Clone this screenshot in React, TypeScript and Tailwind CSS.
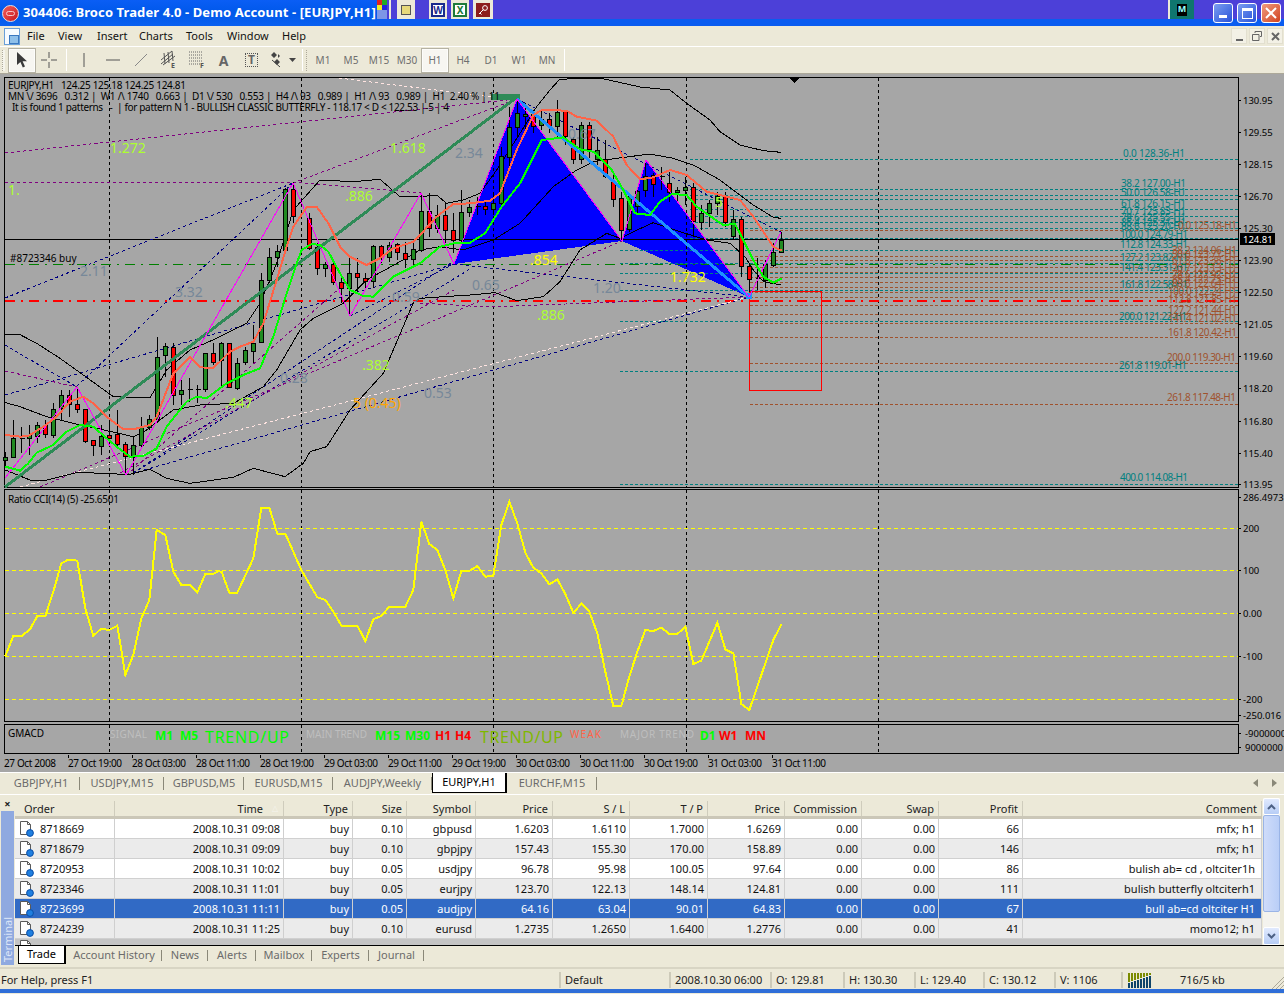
import type { ReactNode } from 'react';

type Pt = [number, number];
// candle: x, body top, body bottom, wick high, wick low, kind
type Candle = [number, number, number, number, number, 'g' | 'r' | 'd'];

// traced at 3x from the chart, so the left half and the right half each have their own origin
const leftPt = ([x, y]: Pt): Pt => [x / 3, 130 + y / 3];
const rightPt = ([x, y]: Pt): Pt => [420 + x / 3, 90 + y / 3];
const line = (a: Pt[], b: Pt[] = []) =>
  [...a.map(leftPt), ...b.map(rightPt)].map((p) => p.join(',')).join(' ');

const leftCandles: Candle[] = [
  [16, 982, 992, 965, 1010, 'g'], [40, 925, 982, 870, 985, 'g'], [64, 925, 929, 890, 970, 'd'], [88, 915, 925, 885, 975, 'g'],
  [112, 885, 920, 875, 940, 'g'], [136, 885, 912, 870, 925, 'r'], [160, 838, 915, 820, 925, 'g'], [184, 796, 835, 780, 870, 'g'],
  [208, 796, 822, 780, 860, 'r'], [232, 824, 838, 770, 850, 'r'], [256, 838, 935, 838, 940, 'r'], [280, 932, 946, 930, 978, 'r'],
  [304, 918, 950, 885, 975, 'g'], [328, 916, 925, 880, 945, 'r'], [352, 912, 944, 840, 950, 'r'], [376, 942, 980, 935, 1035, 'r'],
  [400, 946, 982, 920, 1035, 'g'], [424, 892, 946, 860, 950, 'g'], [448, 868, 892, 855, 900, 'g'], [472, 682, 868, 620, 880, 'g'],
  [496, 648, 676, 640, 740, 'g'], [520, 652, 796, 640, 825, 'r'], [544, 782, 794, 750, 825, 'g'], [568, 778, 782, 745, 815, 'd'],
  [592, 778, 782, 765, 820, 'd'], [616, 670, 778, 670, 785, 'g'], [640, 670, 698, 640, 705, 'r'], [664, 640, 690, 635, 770, 'g'],
  [688, 640, 772, 640, 775, 'r'], [712, 700, 775, 685, 780, 'g'], [736, 660, 698, 650, 705, 'g'], [760, 640, 664, 585, 700, 'g'],
  [784, 450, 638, 430, 640, 'g'], [808, 382, 452, 355, 460, 'g'], [832, 364, 382, 345, 410, 'g'], [856, 178, 362, 175, 370, 'g'],
  [880, 178, 260, 155, 278, 'r'], [928, 265, 355, 250, 360, 'r'], [952, 352, 415, 340, 435, 'r'], [976, 404, 416, 395, 440, 'g'],
  [1000, 404, 458, 398, 465, 'r'], [1024, 458, 474, 440, 520, 'r'], [1048, 430, 474, 385, 555, 'g'], [1072, 430, 442, 385, 490, 'r'],
  [1096, 446, 455, 430, 480, 'r'], [1120, 348, 455, 345, 475, 'g'], [1144, 350, 382, 345, 400, 'r'], [1168, 346, 382, 335, 395, 'g'],
  [1192, 344, 368, 340, 390, 'r'], [1216, 370, 388, 335, 415, 'r'], [1240, 358, 388, 335, 405, 'g'], [1264, 244, 360, 190, 365, 'g'],
];

const rightCandles: Candle[] = [
  [28, 365, 415, 310, 440, 'r'], [52, 375, 415, 345, 430, 'g'], [76, 375, 422, 340, 460, 'r'], [100, 420, 450, 370, 490, 'r'],
  [124, 366, 450, 300, 460, 'g'], [148, 352, 368, 330, 380, 'g'], [172, 349, 352, 320, 375, 'd'], [196, 350, 358, 335, 375, 'r'],
  [220, 340, 358, 310, 375, 'g'], [244, 200, 340, 170, 345, 'g'], [268, 112, 202, 50, 235, 'g'], [292, 70, 112, 30, 140, 'g'],
  [316, 72, 78, 40, 130, 'g'], [340, 72, 108, 60, 130, 'r'], [364, 88, 105, 60, 120, 'g'], [388, 88, 108, 70, 130, 'r'],
  [412, 68, 110, 30, 140, 'g'], [436, 65, 140, 60, 165, 'r'], [460, 148, 208, 140, 222, 'r'], [484, 105, 208, 95, 222, 'g'],
  [508, 105, 178, 95, 205, 'r'], [532, 180, 208, 140, 225, 'g'], [556, 208, 258, 150, 265, 'r'], [580, 275, 328, 245, 350, 'r'],
  [604, 325, 422, 305, 450, 'r'], [628, 320, 418, 315, 425, 'g'], [652, 305, 350, 295, 370, 'g'], [676, 258, 302, 210, 320, 'g'],
  [700, 255, 282, 250, 320, 'r'], [724, 260, 263, 230, 300, 'd'], [748, 280, 308, 245, 335, 'r'], [772, 300, 308, 290, 340, 'g'],
  [796, 292, 302, 262, 345, 'g'], [820, 292, 395, 280, 440, 'r'], [844, 370, 397, 345, 420, 'g'], [868, 340, 370, 330, 410, 'g'],
  [892, 320, 340, 305, 375, 'g'], [916, 318, 398, 305, 410, 'r'], [940, 388, 440, 360, 450, 'g'], [964, 388, 530, 380, 560, 'r'],
  [988, 528, 568, 520, 605, 'r'], [1012, 564, 567, 505, 600, 'd'], [1036, 522, 570, 510, 595, 'g'], [1060, 488, 525, 460, 530, 'g'],
  [1084, 450, 488, 425, 490, 'g'],
];

const greenMa = line(
  [[16, 1010], [60, 1022], [85, 1000], [110, 968], [160, 945], [200, 905], [240, 885], [280, 890], [320, 925], [350, 950], [390, 980], [430, 978], [470, 955], [500, 890], [560, 815], [590, 800], [620, 805], [680, 760], [730, 735], [780, 715], [820, 620], [860, 490], [890, 400], [905, 360], [935, 342], [960, 345], [985, 365], [1020, 430], [1050, 480], [1090, 498], [1120, 500], [1150, 470], [1180, 440], [1230, 415]],
  [[0, 520], [60, 470], [100, 460], [150, 458], [195, 430], [245, 350], [300, 280], [340, 200], [365, 150], [430, 142], [480, 178], [520, 185], [575, 240], [610, 300], [645, 370], [690, 375], [720, 335], [755, 312], [800, 315], [830, 350], [870, 378], [910, 405], [945, 402], [965, 440], [1000, 510], [1030, 560], [1060, 578], [1085, 565]],
);
const orangeMa = line(
  [[16, 915], [60, 920], [85, 918], [130, 890], [170, 860], [210, 815], [250, 800], [280, 820], [320, 860], [370, 898], [400, 898], [450, 885], [470, 860], [520, 730], [570, 680], [600, 712], [640, 714], [690, 665], [720, 650], [760, 635], [790, 580], [830, 450], [860, 350], [880, 290], [920, 232], [950, 230], [985, 280], [1020, 350], [1050, 380], [1100, 405], [1140, 385], [1180, 355], [1240, 335]],
  [[0, 435], [50, 380], [100, 342], [150, 340], [210, 332], [240, 310], [290, 180], [340, 75], [365, 60], [440, 62], [470, 80], [530, 92], [580, 140], [620, 225], [660, 268], [700, 262], [750, 240], [800, 255], [860, 305], [960, 330], [1000, 380], [1060, 470], [1085, 482]],
);
const bandLines = [
  line(
    [[16, 614], [60, 614], [110, 640], [180, 685], [250, 735], [340, 800], [450, 803], [500, 720], [570, 660], [650, 625], [740, 580], [780, 520], [830, 400], [880, 240], [960, 150], [1060, 155], [1140, 148], [1200, 200]],
    [[0, 320], [50, 315], [80, 340], [130, 330], [180, 310], [230, 240], [300, 130], [350, 50], [390, 0], [417, -30], [465, -36], [540, -36], [660, -9], [750, 0], [800, 40], [870, 90], [900, 125], [960, 165], [1030, 182], [1083, 187]],
  ),
  line(
    [[16, 818], [60, 830], [140, 860], [220, 880], [290, 895], [400, 920], [440, 900], [520, 840], [600, 825], [700, 820], [790, 770], [830, 720], [900, 600], [940, 565], [1030, 520], [1100, 450], [1200, 395]],
    [[0, 480], [60, 470], [130, 480], [220, 450], [300, 400], [400, 290], [470, 240], [520, 215], [590, 205], [690, 192], [760, 205], [820, 225], [900, 270], [1000, 345], [1060, 382], [1083, 385]],
  ),
  line(
    [[16, 1020], [90, 1050], [140, 1050], [230, 1028], [330, 1030], [380, 1035], [450, 1018], [500, 1045], [570, 1060], [700, 1042], [760, 1015], [855, 1040], [910, 1000], [930, 965], [980, 950], [1050, 840], [1150, 730], [1240, 518]],
    [[0, 625], [70, 620], [150, 615], [225, 608], [290, 632], [370, 620], [420, 575], [480, 480], [560, 430], [600, 445], [640, 425], [700, 398], [780, 425], [860, 450], [930, 460], [975, 500], [1000, 540], [1030, 575], [1083, 585]],
  ),
];

const zigzag = '5,478 77,387 126,475 293,183 350,316 421,193 454,264 517,99 622,241 646,160 749,297 781,232';

// fib fan lines, page coordinates
const navyDashes = ['5,298 293,183', '77,386 293,183', '5,345 77,387', '133,473 454,261', '133,473 470,269', '127,475 749,297', '350,316 454,264', '5,395 454,264', '454,264 749,297', '517,99 781,232'];
const purpleDashes = ['5,153 517,99', '293,183 517,99', '5,182 293,182 421,193', '5,371 77,387', '40,487 622,241', '127,475 350,279', '120,473 454,290', '420,303 487,307 749,297'];
const pinkDashes = ['20,487 749,297', '339,78 492,97'];

const tealLines: [number, number][] = [[159, 690], [189, 690], [195, 690], [199, 690], [209, 690], [216, 690], [222, 690], [228, 690], [238, 690], [250, 620], [263, 620], [273, 620], [290, 620], [321, 620], [371, 620], [484, 620]];
const brownLines = [230, 256, 260, 267, 272, 277, 282, 287, 292, 297, 305, 314, 323, 337, 363, 404];

const tealLabels: [string, number, number][] = [
  ['0.0 128.36-H1', 1123, 157], ['38.2 127.00-H1', 1121, 187], ['50.0 126.58-H1', 1121, 196], ['61.8 126.15-H1', 1121, 207],
  ['70.7 125.83-H1', 1121, 215], ['78.6 125.55-H1', 1121, 221], ['85.4 125.31-H1', 1121, 226], ['88.6 125.20-H1', 1121, 230],
  ['100.0 124.79-H1', 1120, 238], ['112.8 124.33-H1', 1120, 248], ['127.2 123.82-H1', 1120, 261], ['141.4 123.31-H1', 1120, 271],
  ['161.8 122.58-H1', 1120, 288], ['200.0 121.22-H1', 1119, 320], ['261.8 119.01-H1', 1119, 369], ['400.0 114.08-H1', 1120, 481],
];
const brownLabels: [string, number, number][] = [
  ['0.0 125.18-H1', 1178, 229], ['38.2 124.06-H1', 1172, 254], ['50.0 123.71-H1', 1172, 258], ['61.8 123.38-H1', 1172, 264],
  ['70.7 123.13-H1', 1172, 272], ['78.6 122.92-H1', 1172, 278], ['85.4 122.73-H1', 1172, 283], ['88.6 122.64-H1', 1172, 287],
  ['100.0 122.24-H1', 1168, 295], ['112.8 121.85-H1', 1168, 303], ['127.2 121.44-H1', 1168, 314], ['141.4 121.02-H1', 1168, 322],
  ['161.8 120.42-H1', 1168, 336], ['200.0 119.30-H1', 1167, 361], ['261.8 117.48-H1', 1167, 401],
];

const ratioLabels: [string, number, number, string][] = [
  ['1.272', 110, 153, '#adff2f'], ['1.', 8, 195, '#adff2f'], ['1.618', 390, 153, '#adff2f'], ['.886', 345, 201, '#adff2f'],
  ['.382', 362, 370, '#adff2f'], ['.447', 225, 408, '#adff2f'], ['.886', 537, 320, '#adff2f'], ['5', 715, 207, '#adff2f'],
  ['2.11', 80, 276, '#778899'], ['3.32', 175, 297, '#778899'], ['0.59', 392, 302, '#778899'], ['0.28', 280, 383, '#778899'],
  ['0.65', 472, 290, '#778899'], ['1.20', 593, 293, '#778899'], ['0.53', 424, 398, '#778899'], ['2.34', 455, 158, '#778899'],
  ['0.67', 568, 139, '#778899'], ['.854', 530, 265, '#ffff00'], ['1.732', 670, 282, '#ffff00'], ['5 (0.45)', 353, 408, '#ffa500'],
];

const priceAxis: [string, number][] = [['130.95', 100], ['129.55', 132], ['128.15', 164], ['126.70', 196], ['125.30', 228], ['123.90', 260], ['122.50', 292], ['121.05', 324], ['119.60', 356], ['118.20', 388], ['116.80', 421], ['115.40', 453], ['113.95', 484]];
const cciAxis: [string, number][] = [['286.4973', 497], ['200', 528], ['100', 570], ['0.00', 613], ['-100', 656], ['-200', 699], ['-250.016', 715]];
const cciLevels = [528, 570, 613, 656, 699];
const gridX = [109, 301, 493, 686, 878];

const cciLine = [
  ...([[16, 498], [40, 438], [65, 438], [90, 418], [112, 378], [136, 378], [160, 305], [184, 220], [205, 209], [232, 212], [256, 355], [280, 438], [303, 416], [328, 420], [352, 407], [376, 555], [400, 495], [424, 385], [448, 330], [470, 120], [496, 135], [520, 245], [544, 285], [570, 285], [592, 308], [616, 252], [640, 252], [655, 243], [665, 246], [688, 308], [712, 308], [760, 205], [784, 53], [808, 53], [832, 131], [856, 131], [904, 240], [952, 322], [976, 330], [1000, 365], [1024, 407], [1072, 407], [1096, 453], [1120, 388], [1144, 378], [1168, 350], [1216, 350], [1240, 300]] as Pt[]).map(([x, y]) => `${x / 3},${490 + y / 3}`),
  ...([[64, 95], [88, 162], [112, 180], [136, 240], [160, 325], [184, 243], [208, 243], [232, 228], [256, 260], [280, 257], [304, 105], [328, 35], [352, 100], [376, 188], [400, 233], [424, 250], [448, 283], [472, 268], [496, 312], [520, 369], [544, 341], [568, 365], [592, 430], [616, 545], [640, 648], [664, 648], [688, 560], [712, 485], [736, 420], [760, 423], [784, 413], [808, 432], [832, 432], [856, 410], [880, 522], [904, 512], [952, 398], [976, 478], [1000, 490], [1024, 642], [1048, 660], [1072, 590], [1096, 520], [1120, 450], [1144, 403]] as Pt[]).map(([x, y]) => `${400 + x / 3},${490 + y / 3}`),
].join(' ');

const timeLabels = ['27 Oct 2008', '27 Oct 19:00', '28 Oct 03:00', '28 Oct 11:00', '28 Oct 19:00', '29 Oct 03:00', '29 Oct 11:00', '29 Oct 19:00', '30 Oct 03:00', '30 Oct 11:00', '30 Oct 19:00', '31 Oct 03:00', '31 Oct 11:00'];

const orders = [
  ['8718669', '2008.10.31 09:08', 'buy', '0.10', 'gbpusd', '1.6203', '1.6110', '1.7000', '1.6269', '0.00', '0.00', '66', 'mfx; h1'],
  ['8718679', '2008.10.31 09:09', 'buy', '0.10', 'gbpjpy', '157.43', '155.30', '170.00', '158.89', '0.00', '0.00', '146', 'mfx; h1'],
  ['8720953', '2008.10.31 10:02', 'buy', '0.05', 'usdjpy', '96.78', '95.98', '100.05', '97.64', '0.00', '0.00', '86', 'bulish ab= cd , oltciter1h'],
  ['8723346', '2008.10.31 11:01', 'buy', '0.05', 'eurjpy', '123.70', '122.13', '148.14', '124.81', '0.00', '0.00', '111', 'bulish butterfly oltciterh1'],
  ['8723699', '2008.10.31 11:11', 'buy', '0.05', 'audjpy', '64.16', '63.04', '90.01', '64.83', '0.00', '0.00', '67', 'bull ab=cd oltciter H1'],
  ['8724239', '2008.10.31 11:25', 'buy', '0.10', 'eurusd', '1.2735', '1.2650', '1.6400', '1.2776', '0.00', '0.00', '41', 'momo12; h1'],
];
const columns = ['Order', 'Time', 'Type', 'Size', 'Symbol', 'Price', 'S / L', 'T / P', 'Price', 'Commission', 'Swap', 'Profit', 'Comment'];
const rowGrid = 'grid grid-cols-[100px_169px_69px_54px_69px_77px_77px_78px_77px_77px_77px_84px_239px]';

const chartTabs = [
  { label: 'GBPJPY,H1', width: 'w-[78px]' }, { label: 'USDJPY,M15', width: 'w-[84px]' }, { label: 'GBPUSD,M5', width: 'w-[80px]' },
  { label: 'EURUSD,M15', width: 'w-[89px]' }, { label: 'AUDJPY,Weekly', width: 'w-[99px]' }, { label: 'EURJPY,H1', width: 'w-[75px]', active: true },
  { label: 'EURCHF,M15', width: 'w-[90px]' },
];
const terminalTabs = [
  { label: 'Account History', width: 'w-[96px]' }, { label: 'News', width: 'w-[46px]' }, { label: 'Alerts', width: 'w-[48px]' },
  { label: 'Mailbox', width: 'w-[56px]' }, { label: 'Experts', width: 'w-[57px]' }, { label: 'Journal', width: 'w-[55px]' },
];
const menus = [
  { label: 'File', width: 'w-[31px]' }, { label: 'View', width: 'w-[39px]' }, { label: 'Insert', width: 'w-[42px]' }, { label: 'Charts', width: 'w-[47px]' },
  { label: 'Tools', width: 'w-[41px]' }, { label: 'Window', width: 'w-[55px]' }, { label: 'Help', width: 'w-[30px]' },
];
const statusCells = [
  { label: '2008.10.30 06:00', width: 'w-[101px]' }, { label: 'O: 129.81', width: 'w-[73px]' }, { label: 'H: 130.30', width: 'w-[71px]' },
  { label: 'L: 129.40', width: 'w-[69px]' }, { label: 'C: 130.12', width: 'w-[71px]' }, { label: 'V: 1106', width: 'w-[67px]' },
];
const timeframes = ['M1', 'M5', 'M15', 'M30', 'H1', 'H4', 'D1', 'W1', 'MN'];

function CandleMarks({ candles, at }: { candles: Candle[]; at: (p: Pt) => Pt }) {
  return (
    <g>
      {candles.map(([x, top, bottom, hi, lo, kind]) => {
        const [cx, y1] = at([x, top]);
        const [, y2] = at([x, bottom]);
        const [, wickTop] = at([x, hi]);
        const [, wickBottom] = at([x, lo]);
        const px = Math.round(cx) + 0.5;
        return (
          <g key={x}>
            <line x1={px} x2={px} y1={wickTop} y2={wickBottom} stroke="#000" />
            {kind === 'd' ? (
              <line x1={px - 2} x2={px + 3} y1={y1} y2={y1} stroke="#000" />
            ) : (
              <rect x={px - 2} y={y1} width={4} height={y2 - y1} fill={kind === 'g' ? '#228b22' : '#ff0000'} stroke="#000" />
            )}
          </g>
        );
      })}
    </g>
  );
}

function GridLines({ top, bottom }: { top: number; bottom: number }) {
  return (
    <g>
      {gridX.map((x) => (
        <line key={x} x1={x + 0.5} x2={x + 0.5} y1={top} y2={bottom} stroke="#000" strokeDasharray="3 3" />
      ))}
    </g>
  );
}

function AxisLabels({ labels }: { labels: [string, number][] }) {
  return (
    <g>
      {labels.map(([text, y]) => (
        <g key={text}>
          <line x1={1238} x2={1241} y1={y} y2={y} stroke="#000" />
          <text x={1243} y={y + 3.5} fontSize={9.5} fill="#000">{text}</text>
        </g>
      ))}
    </g>
  );
}

function MainPane() {
  return (
    <svg width={1284} height={415} viewBox="0 74 1284 415" shapeRendering="crispEdges" className="block">
      <rect x={4.5} y={77.5} width={1234} height={410} fill="none" stroke="#000" />
      <polygon points="454,264 517,99 622,241" fill="#0000ff" />
      <polygon points="622,241 646,160 749,297" fill="#0000ff" />
      <GridLines top={78} bottom={487} />
      <polygon points="789,78 799,78 794,83" fill="#000" />

      {tealLines.map(([y, x]) => (
        <line key={y} x1={x} x2={1238} y1={y + 0.5} y2={y + 0.5} stroke="#008080" strokeDasharray="3 2" />
      ))}
      {brownLines.map((y) => (
        <line key={y} x1={750} x2={1238} y1={y + 0.5} y2={y + 0.5} stroke="#a0522d" strokeDasharray="3 2" />
      ))}
      <line x1={5} x2={1238} y1={239.5} y2={239.5} stroke="#000" />
      <line x1={5} x2={1238} y1={264.5} y2={264.5} stroke="#008000" strokeDasharray="10 6 2 6" />
      <line x1={5} x2={1238} y1={300.5} y2={300.5} stroke="#ff0000" strokeWidth={2} strokeDasharray="10 6 2 6" />

      {navyDashes.map((points) => (
        <polyline key={points} points={points} fill="none" stroke="#000080" strokeDasharray="3 3" />
      ))}
      {purpleDashes.map((points) => (
        <polyline key={points} points={points} fill="none" stroke="#800080" strokeDasharray="3 3" />
      ))}
      {pinkDashes.map((points) => (
        <polyline key={points} points={points} fill="none" stroke="#ffe4e1" strokeDasharray="3 3" />
      ))}

      <rect x={749.5} y={291.5} width={72} height={99} fill="none" stroke="#ff0000" />
      {bandLines.map((points) => (
        <polyline key={points} points={points} fill="none" stroke="#000" />
      ))}
      <CandleMarks candles={leftCandles} at={leftPt} />
      <CandleMarks candles={rightCandles} at={rightPt} />

      <polyline points="5,487 517,97" fill="none" stroke="#2e8b57" strokeWidth={3} />
      {[494, 500, 506, 512, 517].map((x) => (
        <circle key={x} cx={x} cy={97} r={3.5} fill="#2e8b57" />
      ))}
      <polyline points="517,99 749,297" fill="none" stroke="#1e90ff" strokeWidth={3} />
      <circle cx={749} cy={296} r={3.5} fill="#1e90ff" />
      <polyline points={zigzag} fill="none" stroke="#ff00ff" />
      <polyline points={orangeMa} fill="none" stroke="#ff6347" strokeWidth={2} />
      <polyline points={greenMa} fill="none" stroke="#00ff00" strokeWidth={2} />

      <text x={8} y={89} fontSize={10} fill="#000" className="whitespace-pre" textLength={178}>EURJPY,H1   124.25 125.18 124.25 124.81</text>
      <text x={8} y={100} fontSize={10} fill="#000" className="whitespace-pre" textLength={492}>{'MN \\/ 3696   0.312 |  W1 /\\ 1740   0.663 |  D1 \\/ 530   0.553 |  H4 /\\ 93   0.989 |  H1 /\\ 93   0.989 |  H1  2.40 % | 11'}</text>
      <text x={12} y={111} fontSize={10} fill="#000" className="whitespace-pre" textLength={437}>{'It is found 1 patterns   -  | for pattern N 1 - BULLISH CLASSIC BUTTERFLY - 118.17 < D < 122.53 |-5 | 4'}</text>
      <text x={10} y={262} fontSize={10} fill="#000">#8723346 buy</text>

      {ratioLabels.map(([text, x, y, color]) => (
        <text key={`${text}${x}`} x={x} y={y} fontSize={14} fill={color}>{text}</text>
      ))}
      {tealLabels.map(([text, x, y]) => (
        <text key={text} x={x} y={y} fontSize={10} fill="#008080" textLength={text.length > 14 ? 68 : text.length > 13 ? 65 : 62}>{text}</text>
      ))}
      {brownLabels.map(([text, x, y]) => (
        <text key={text} x={x} y={y} fontSize={10} fill="#a0522d" textLength={text.length > 14 ? 69 : text.length > 13 ? 65 : 59}>{text}</text>
      ))}

      <AxisLabels labels={priceAxis} />
      <rect x={1240} y={233} width={35} height={12} fill="#000" />
      <text x={1243} y={243} fontSize={9.5} fill="#fff">124.81</text>
    </svg>
  );
}

function CciPane() {
  return (
    <svg width={1284} height={234} viewBox="0 489 1284 234" shapeRendering="crispEdges" className="block">
      <line x1={4.5} x2={4.5} y1={489} y2={722} stroke="#000" />
      <line x1={1238.5} x2={1238.5} y1={489} y2={722} stroke="#000" />
      <line x1={4} x2={1239} y1={721.5} y2={721.5} stroke="#000" />
      <line x1={4} x2={1239} y1={489.5} y2={489.5} stroke="#000" />
      <GridLines top={490} bottom={721} />
      {cciLevels.map((y) => (
        <line key={y} x1={5} x2={1238} y1={y + 0.5} y2={y + 0.5} stroke="#ffff00" strokeDasharray="4 3" />
      ))}
      <polyline points={cciLine} fill="none" stroke="#ffff00" strokeWidth={2} />
      <text x={8} y={503} fontSize={10} fill="#000" textLength={111}>Ratio CCI(14) (5) -25.6501</text>
      <AxisLabels labels={cciAxis} />
    </svg>
  );
}

function MacdPane() {
  const small: [string, number, number, string][] = [['SIGNAL', 110, 37, '#bebebe'], ['MAIN TREND', 306, 61, '#bebebe'], ['WEAK', 570, 31, '#ff6347'], ['MAJOR TREND', 620, 74, '#bebebe']];
  const bold: [string, number, string][] = [['M1', 155, '#00ff00'], ['M5', 180, '#00ff00'], ['M15', 375, '#00ff00'], ['M30', 405, '#00ff00'], ['H1', 435, '#ff0000'], ['H4', 455, '#ff0000'], ['D1', 700, '#00ff00'], ['W1', 719, '#ff0000'], ['MN', 745, '#ff0000']];
  return (
    <svg width={1284} height={32} viewBox="0 723 1284 32" shapeRendering="crispEdges" className="block">
      <rect x={4.5} y={724.5} width={1234} height={29} fill="none" stroke="#000" />
      <GridLines top={725} bottom={753} />
      <text x={8} y={737} fontSize={10} fill="#000">GMACD</text>
      {small.map(([text, x, w, color]) => (
        <text key={text} x={x} y={738} fontSize={10} fill={color} textLength={w}>{text}</text>
      ))}
      {bold.map(([text, x, color]) => (
        <text key={text} x={x} y={740} fontSize={12} fontWeight={700} fill={color}>{text}</text>
      ))}
      <text x={205} y={743} fontSize={16} fill="#00ff00" textLength={84}>TREND/UP</text>
      <text x={480} y={743} fontSize={16} fill="#7fb800" textLength={83}>TREND/UP</text>
      <line x1={1238} x2={1241} y1={733} y2={733} stroke="#000" />
      <line x1={1238} x2={1241} y1={747} y2={747} stroke="#000" />
      <text x={1245} y={737} fontSize={9.5} fill="#000">-9000000</text>
      <text x={1245} y={751} fontSize={9.5} fill="#000">9000000</text>
    </svg>
  );
}

function TimeAxis() {
  return (
    <svg width={1284} height={17} viewBox="0 755 1284 17" shapeRendering="crispEdges" className="block">
      {timeLabels.map((text, i) => (
        <g key={text}>
          {i > 0 && <line x1={68.5 + (i - 1) * 64} x2={68.5 + (i - 1) * 64} y1={754} y2={758} stroke="#000" />}
          <text x={4 + i * 64} y={767} fontSize={10} fill="#000" textLength={i === 0 ? 52 : 54}>{text}</text>
        </g>
      ))}
    </svg>
  );
}

function OrderIcon({ small }: { small?: boolean }) {
  return (
    <svg width={15} height={17} viewBox="0 0 15 17" className="shrink-0">
      <path d="M1.5 1.5h7l3 3v10h-10z" fill="#fff" stroke="#5a5a5a" />
      <path d="M8.5 1.5v3h3" fill="none" stroke="#5a5a5a" />
      {!small && <circle cx={11} cy={13} r={3.4} fill="#1f7fe0" stroke="#0b4fa8" />}
    </svg>
  );
}

function ToolSlot({ width, children, selected }: { width: string; children: ReactNode; selected?: boolean }) {
  return (
    <div className={`${width} h-[23px] flex items-center justify-center shrink-0 ${selected ? 'border border-[#fdfdfb] outline outline-1 outline-[#b5b2a4] bg-[#f7f6f1]' : ''}`}>
      {children}
    </div>
  );
}

function ToolSep() {
  return <div className="w-px h-[22px] mx-[3px] bg-[#aca899] border-r border-white shrink-0" />;
}

function Toolbar() {
  return (
    <div className="h-[27px] shrink-0 flex items-center border-b border-[#aca899] bg-[#ece9d8]">
      <div className="w-[3px] h-[21px] ml-[2px] mr-[4px] border-l border-dotted border-[#aca899] bg-[#f5f4ec] shrink-0" />
      <ToolSlot width="w-[26px]" selected>
        <svg width={14} height={18} viewBox="0 0 14 18"><path d="M2 1v13l3.4-3 2.4 5.6 2.2-1-2.4-5.4h4.4z" fill="#3a3a3a" /></svg>
      </ToolSlot>
      <ToolSlot width="w-[28px]">
        <svg width={16} height={16} viewBox="0 0 16 16" stroke="#555"><path d="M0 8h6M10 8h6M8 0v6M8 10v6" /></svg>
      </ToolSlot>
      <ToolSep />
      <ToolSlot width="w-[28px]">
        <svg width={10} height={14} viewBox="0 0 10 14" stroke="#555"><path d="M5 0v14" /></svg>
      </ToolSlot>
      <ToolSlot width="w-[29px]">
        <svg width={14} height={4} viewBox="0 0 14 4" stroke="#555"><path d="M0 2h14" /></svg>
      </ToolSlot>
      <ToolSlot width="w-[28px]">
        <svg width={14} height={14} viewBox="0 0 14 14" stroke="#888"><path d="M1 13 13 1" /></svg>
      </ToolSlot>
      <ToolSlot width="w-[27px]">
        <svg width={18} height={20} viewBox="0 0 18 20" fill="none" stroke="#555">
          <path d="M1 10 12 1M1 14 13 4M3 15 15 6M4 3l1 11M8 2l1 11M12 1l1 10" />
          <text x={11} y={18} fontSize={7} fontWeight={700} fill="#555" stroke="none">E</text>
        </svg>
      </ToolSlot>
      <ToolSlot width="w-[29px]">
        <svg width={18} height={20} viewBox="0 0 18 20" fill="none" stroke="#666" strokeDasharray="1 1">
          <path d="M1 2h13M1 5h13M1 8h13M1 11h13M1 14h13" />
          <text x={12} y={18} fontSize={7} fontWeight={700} fill="#555" stroke="none" strokeDasharray="0">F</text>
        </svg>
      </ToolSlot>
      <ToolSlot width="w-[25px]"><span className="text-[14px] font-bold text-[#666]">A</span></ToolSlot>
      <ToolSlot width="w-[31px]">
        <div className="w-[13px] h-[14px] border border-dotted border-[#555] flex items-center justify-center text-[12px] font-bold text-[#666] leading-none">T</div>
      </ToolSlot>
      <ToolSlot width="w-[32px]">
        <svg width={26} height={16} viewBox="0 0 26 16" fill="#444"><path d="M1 3l3-3 3 3-3 3zM7 7l3 3-3 3-3-3zM8 2l2 2-2 2zM19 6h7l-3.5 4z" /><path d="M2 8l8 7" stroke="#444" fill="none" /></svg>
      </ToolSlot>
      <ToolSep />
      <div className="w-[2px] h-[21px] mr-[1px] border-l border-dotted border-[#aca899] shrink-0" />
      {timeframes.map((tf) => (
        <ToolSlot key={tf} width={tf === 'H1' ? 'w-[26px] mx-px' : 'w-[28px]'} selected={tf === 'H1'}>
          <span className="text-[10px] text-[#6e6e6e]">{tf}</span>
        </ToolSlot>
      ))}
      <ToolSep />
    </div>
  );
}

function TitleBar() {
  return (
    <div className="h-[26px] shrink-0 relative flex bg-[#0a5cf0]">
      <div className="w-[377px] h-full flex items-center bg-gradient-to-b from-[#0a5ef5] via-[#0058ea] to-[#0a60f0] shrink-0">
        <div className="w-[17px] h-[17px] ml-[2px] mr-[4px] rounded-full bg-gradient-to-br from-[#f25a5a] to-[#c80f1e] border border-[#e8e0e0] flex items-center justify-center shrink-0">
          <div className="w-[9px] h-[5px] rounded-full border border-[#f6c8c8]" />
        </div>
        <span className="text-[13px] font-bold text-white whitespace-nowrap tracking-[0.1px]">304406: Broco Trader 4.0 - Demo Account - [EURJPY,H1]</span>
      </div>
      <div className="flex-1 h-[19px] bg-[#4c40d8] flex items-start">
        <div className="w-[10px] h-[19px] bg-[#7d96e6]">
          <div className="grid grid-cols-2 w-[10px] h-[10px]">
            <div className="bg-[#d22]" /><div className="bg-[#2a2]" /><div className="bg-[#ee2]" /><div className="bg-[#22d]" />
          </div>
        </div>
        <div className="w-[2px] h-[19px] ml-[2px] bg-[#ece9d8]" />
        <div className="w-[18px] h-[19px] ml-[6px] bg-[#ece9d8] flex items-center justify-center">
          <div className="w-[10px] h-[10px] bg-[#e6d97a] border border-[#555]" />
        </div>
        <div className="w-[18px] h-[19px] ml-[14px] bg-[#ece9d8] flex items-center justify-center">
          <div className="w-[14px] h-[14px] bg-white border-2 border-[#1a2a8c] text-[10px] font-bold leading-none text-[#1a2a8c] text-center">W</div>
        </div>
        <div className="w-[18px] h-[19px] ml-[4px] bg-[#ece9d8] flex items-center justify-center">
          <div className="w-[14px] h-[14px] bg-white border-2 border-[#1d7a3a] text-[10px] font-bold leading-none text-[#1d7a3a] text-center">X</div>
        </div>
        <div className="w-[20px] h-[19px] ml-[4px] bg-[#ece9d8] flex items-center justify-center">
          <svg width={14} height={14} viewBox="0 0 14 14"><rect width={14} height={14} fill="#8c1c1c" /><circle cx={9} cy={5} r={2.4} fill="none" stroke="#fff" /><path d="M7.5 6.5 3 11M4 10l1.5 1.5" stroke="#fff" fill="none" /></svg>
        </div>
        <div className="ml-[675px] w-[26px] h-[19px] bg-[#0f766e] border-l-2 border-[#ece9d8] flex items-center justify-center">
          <div className="w-[10px] h-[12px] bg-black text-[9px] font-bold leading-none text-[#9ff] text-center">M</div>
        </div>
      </div>
      <div className="absolute right-[3px] top-[3px] flex gap-[4px]">
        <div className="w-[20px] h-[20px] rounded-[3px] border border-white bg-gradient-to-br from-[#7c9cf0] to-[#2a50d8] flex items-end pl-[5px] pb-[4px]">
          <div className="w-[8px] h-[3px] bg-white" />
        </div>
        <div className="w-[20px] h-[20px] rounded-[3px] border border-white bg-gradient-to-br from-[#7c9cf0] to-[#2a50d8] flex items-center justify-center">
          <div className="w-[11px] h-[11px] border border-white border-t-[3px]" />
        </div>
        <div className="w-[20px] h-[20px] rounded-[3px] border border-white bg-gradient-to-br from-[#f09a7c] to-[#d0401c] flex items-center justify-center">
          <svg width={12} height={12} viewBox="0 0 12 12" stroke="#fff" strokeWidth={2}><path d="M1 1l10 10M11 1 1 11" /></svg>
        </div>
      </div>
    </div>
  );
}

function MenuBar() {
  return (
    <div className="h-[21px] shrink-0 flex items-center border-b border-white bg-[#ece9d8] relative">
      <div className="w-[16px] h-[17px] ml-[4px] mr-[7px] bg-[#f7fbff] border border-[#6a9fd8] shrink-0 flex items-end justify-end">
        <div className="w-[10px] h-[9px] bg-[#8fc0ea] border border-[#3a78c0]" />
      </div>
      {menus.map((m) => (
        <span key={m.label} className={`${m.width} text-[11px] text-[#111] shrink-0`}>{m.label}</span>
      ))}
      <div className="ml-auto mr-[1px] flex gap-[2px]">
        <div className="w-[16px] h-[16px] bg-[#f3f1e6] border border-[#e2dfcf] flex items-end justify-center pb-[2px]"><div className="w-[7px] h-[2px] bg-[#666]" /></div>
        <div className="w-[16px] h-[16px] bg-[#f3f1e6] border border-[#e2dfcf] flex items-center justify-center">
          <svg width={10} height={10} viewBox="0 0 10 10" fill="none" stroke="#666"><path d="M3 2V.5h6.500v5H8M.5 3.500h6.500v6H.5z" /></svg>
        </div>
        <div className="w-[16px] h-[16px] bg-[#f3f1e6] border border-[#e2dfcf] flex items-center justify-center">
          <svg width={9} height={9} viewBox="0 0 9 9" stroke="#666" strokeWidth={2}><path d="M1 1l7 7M8 1 1 8" /></svg>
        </div>
      </div>
    </div>
  );
}

function ChartTabs() {
  return (
    <div className="h-[23px] shrink-0 flex pl-[2px] border-t border-black bg-[#ece9d8] border-b border-white">
      {chartTabs.map((tab) => (
        <div
          key={tab.label}
          className={`${tab.width} h-[20px] flex items-center justify-center text-[11px] shrink-0 ${
            tab.active
              ? 'bg-white text-black border-x border-b border-black border-r-2'
              : 'text-[#6b6b6b] relative after:absolute after:right-0 after:top-[4px] after:h-[13px] after:w-px after:bg-[#8a8878]'
          }`}
        >
          {tab.label}
        </div>
      ))}
      <div className="ml-auto mr-[7px] flex items-center gap-[14px] h-[20px]">
        <svg width={5} height={8} viewBox="0 0 5 8" fill="#8a8878"><path d="M5 0v8L0 4z" /></svg>
        <svg width={5} height={8} viewBox="0 0 5 8" fill="#8a8878"><path d="M0 0v8l5-4z" /></svg>
      </div>
    </div>
  );
}

function TradeTable() {
  return (
    <div className="w-[1247px] h-[150px] shrink-0 bg-[#c4c4c4] overflow-hidden">
      <div className={`${rowGrid} h-[21px] pt-[3px] bg-[#ece9d8] border-b-[3px] border-[#cbc7b8]`}>
        {columns.map((col, i) => (
          <div
            key={`${col}${i}`}
            className={`text-[11px] leading-[15px] text-[#222] border-r border-[#cfccbc] truncate relative ${
              i === 0 ? 'pl-[9px]' : i === 1 ? 'text-right pr-[20px]' : 'text-right pr-[4px]'
            }`}
          >
            {col}
            {i === 1 && <span className="absolute right-[5px] top-[3px] text-[8px] leading-none text-[#f5f4ee]">△</span>}
          </div>
        ))}
      </div>
      {orders.map((row, r) => {
        const selected = row[0] === '8723699';
        return (
          <div key={row[0]} className={`${rowGrid} h-[20px] border-b border-[#d0d0d0] ${selected ? 'bg-[#316ac5] text-white' : r % 2 ? 'bg-[#ebebeb] text-[#111]' : 'bg-white text-[#111]'}`}>
            {row.map((cell, i) => (
              <div key={i} className={`text-[11px] leading-[19px] border-r border-[#cfcfcf] truncate ${i === 0 ? 'flex items-center pl-[4px] gap-[6px]' : i === 12 ? 'text-right pr-[6px]' : 'text-right pr-[3px]'}`}>
                {i === 0 && <OrderIcon />}
                {cell}
              </div>
            ))}
          </div>
        );
      })}
      <div className="h-[6px] pl-[4px] overflow-hidden"><OrderIcon small /></div>
    </div>
  );
}

function ScrollBar() {
  return (
    <div className="w-[17px] h-[147px] ml-[1px] flex flex-col shrink-0 bg-[#f4f3ee]">
      <div className="h-[17px] rounded-[2px] border border-[#fff] bg-gradient-to-b from-[#e1eafe] to-[#b7cdf6] flex items-center justify-center">
        <svg width={9} height={6} viewBox="0 0 9 6" fill="none" stroke="#4d6185" strokeWidth={2}><path d="M1 5l3.500-3.500L8 5" /></svg>
      </div>
      <div className="h-[97px] rounded-[2px] border border-[#9ab4e6] bg-gradient-to-r from-[#cfdcfa] to-[#b9cef7]" />
      <div className="flex-1" />
      <div className="h-[18px] rounded-[2px] border border-[#fff] bg-gradient-to-b from-[#e1eafe] to-[#b7cdf6] flex items-center justify-center">
        <svg width={9} height={6} viewBox="0 0 9 6" fill="none" stroke="#4d6185" strokeWidth={2}><path d="M1 1l3.500 3.500L8 1" /></svg>
      </div>
    </div>
  );
}

function Terminal() {
  return (
    <div className="h-[174px] shrink-0 flex bg-[#ece9d8] border-b-2 border-double border-[#d8d5c4]">
      <div className="w-[15px] shrink-0 flex flex-col items-start pl-[1px]">
        <div className="w-[13px] h-[16px] flex items-center justify-center text-[11px] font-bold leading-none text-[#222]">×</div>
        <div className="w-[13px] h-[154px] bg-[#8fa9e0] flex items-end justify-center pb-[3px]">
          <span className="[writing-mode:vertical-rl] rotate-180 text-[11px] leading-none text-[#dde6f8]">Terminal</span>
        </div>
      </div>
      <div className="flex-1 flex flex-col pt-[3px] min-w-0">
        <div className="h-[147px] flex items-start">
          <TradeTable />
          <ScrollBar />
        </div>
        <div className="h-[20px] flex pl-[3px] border-t border-black bg-[#ece9d8]">
          <div className="w-[48px] h-[18px] bg-white border-x border-b border-black border-r-2 flex items-center justify-center text-[11px] text-black shrink-0">Trade</div>
          {terminalTabs.map((tab) => (
            <div key={tab.label} className={`${tab.width} h-[19px] flex items-center justify-center text-[11px] text-[#6b6b6b] shrink-0 relative after:absolute after:right-0 after:top-[4px] after:h-[11px] after:w-px after:bg-[#8a8878]`}>
              {tab.label}
            </div>
          ))}
        </div>
      </div>
    </div>
  );
}

function StatusBar() {
  const sep = 'border-l-2 border-[#cdcab9] pl-[4px]';
  return (
    <div className="h-[20px] shrink-0 flex items-center pt-[2px] text-[11px] text-[#222] bg-[#ece9d8] relative">
      <div className="w-[559px] pl-[1px] shrink-0">For Help, press F1</div>
      <div className={`w-[110px] shrink-0 ${sep}`}>Default</div>
      {statusCells.map((cell) => (
        <div key={cell.label} className={`${cell.width} shrink-0 whitespace-nowrap ${sep}`}>{cell.label}</div>
      ))}
      <div className={`flex-1 flex items-center h-[16px] ${sep} pl-[5px]`}>
        <svg width={25} height={15} viewBox="0 0 25 15" shapeRendering="crispEdges">
          {[0, 3, 6, 9, 12, 15, 18, 21].map((x, i) => (
            <g key={x}>
              <rect x={x} y={0} width={2} height={9 - i} fill="#7b8b00" />
              <rect x={x} y={Math.max(10 - i, 2)} width={2} height={5 + i} fill="#0f4468" />
            </g>
          ))}
        </svg>
        <span className="ml-[27px]">716/5 kb</span>
      </div>
      <svg width={12} height={12} viewBox="0 0 12 12" className="absolute right-0 bottom-0" stroke="#aca899"><path d="M12 0 0 12M12 4l-8 8M12 8l-4 4" /></svg>
    </div>
  );
}

export default function App() {
  return (
    <div className="w-[1284px] h-[994px] flex flex-col overflow-hidden bg-[#ece9d8] [font-family:'Noto_Sans',sans-serif]">
      <TitleBar />
      <MenuBar />
      <Toolbar />
      <div className="h-[698px] shrink-0 bg-[#a6a6a6] overflow-hidden">
        <MainPane />
        <CciPane />
        <MacdPane />
        <TimeAxis />
      </div>
      <ChartTabs />
      <Terminal />
      <StatusBar />
      <div className="h-[4px] shrink-0 bg-[#2f6ed8]" />
    </div>
  );
}
